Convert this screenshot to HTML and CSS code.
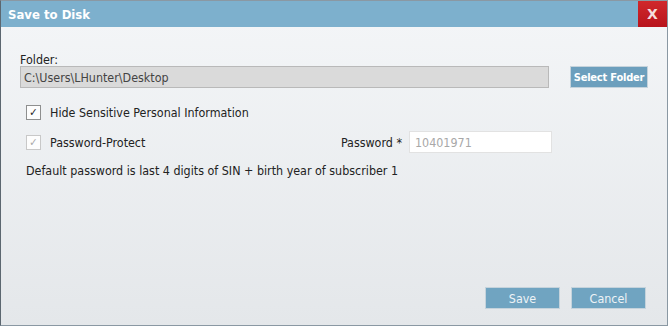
FILE: index.html
```html
<!DOCTYPE html>
<html lang="en">
<head>
    <meta charset="UTF-8">
    <title>Save to Disk</title>
    <link rel="stylesheet" href="styles.css">
</head>
<body>
    <div class="dialog">
        <div class="titlebar">
            <span class="title">Save to Disk</span>
            <button class="close">X</button>
        </div>

        <div class="content">
            <!-- Folder picker -->
            <label class="field-label">Folder:</label>
            <div class="folder-row">
                <input class="folder-input" type="text" value="C:\Users\LHunter\Desktop" readonly>
                <button class="btn btn-select">Select Folder</button>
            </div>

            <div class="check-row">
                <span class="checkbox checked">&#10003;</span>
                <span>Hide Sensitive Personal Information</span>
            </div>

            <div class="check-row password-row">
                <span class="checkbox disabled">&#10003;</span>
                <span class="check-text">Password-Protect</span>
                <span class="pw-label">Password *</span>
                <input class="pw-input" type="text" placeholder="10401971">
            </div>

            <p class="hint">Default password is last 4 digits of SIN + birth year of subscriber 1</p>
        </div>

        <div class="footer">
            <button class="btn btn-action">Save</button>
            <button class="btn btn-action">Cancel</button>
        </div>
    </div>
</body>
</html>
```

FILE: styles.css
```css
body {
    margin: 0;
    padding: 0;
    font-family: "DejaVu Sans Condensed", "DejaVu Sans", sans-serif;
    font-size: 12.4px;
    color: #222;
}
.dialog {
    width: 666px;
    height: 324px;
    border: 1px solid #8a98a3;
    border-left-color: #5c6770;
    display: flex;
    flex-direction: column;
    background: linear-gradient(#f4f6f8, #e4e7ea);
}
.titlebar {
    height: 26px;
    background-color: #7db0cd;
    display: flex;
    align-items: center;
    justify-content: space-between;
}
.title {
    color: #fff;
    font-weight: bold;
    font-size: 13px;
    padding-left: 7px;
}
.close {
    width: 29px;
    height: 26px;
    border: none;
    background: linear-gradient(#d0282c, #b8141c);
    color: #f4dede;
    font-family: "DejaVu Sans", sans-serif;
    font-size: 14px;
    font-weight: bold;
    padding: 0;
}
.content {
    flex: 1;
    padding: 26px 19px 0 19px;
}
.field-label {
    display: block;
    height: 13px;
    line-height: 13px;
}
.folder-row {
    display: flex;
    gap: 21px;
    align-items: center;
}
.folder-input {
    width: 524px;
    height: 20px;
    margin: 0;
    border: 1px solid #b9b9b9;
    background: #dadada;
    color: #444;
    font-family: inherit;
    font-size: 12.4px;
    padding: 0 0 0 3px;
}
.btn {
    border: 1px solid #c5d3dc;
    background-color: #6c9fbd;
    color: #fff;
    font-family: inherit;
    font-size: 12.4px;
    padding: 0;
    white-space: nowrap;
    overflow: hidden;
}
.btn-select {
    width: 78px;
    height: 22px;
    font-weight: bold;
    font-size: 11px;
    letter-spacing: -0.2px;
}
.check-row {
    display: flex;
    align-items: center;
    height: 16px;
    margin-top: 16px;
    padding-left: 6px;
}
.checkbox {
    width: 13px;
    height: 13px;
    border: 1px solid #8e8f8f;
    background: #fdfdfd;
    color: #222;
    font-size: 11px;
    line-height: 13px;
    text-align: center;
    margin-right: 9px;
}
.checkbox.disabled {
    border-color: #c8c8c8;
    color: #a8a8a8;
}
.password-row {
    margin-top: 11px;
    height: 22px;
}
.check-text {
    width: 259px;
}
.pw-label {
    width: 93px;
    text-align: right;
    margin-right: 7px;
}
.pw-input {
    width: 136px;
    height: 20px;
    margin: 0;
    border: 1px solid #e2e2e2;
    background: #fff;
    font-family: inherit;
    font-size: 12.4px;
    padding: 0 0 0 5px;
}
.pw-input::placeholder {
    color: #a8a8a8;
}
.hint {
    margin: 10px 0 0 6px;
}
.footer {
    display: flex;
    justify-content: flex-end;
    gap: 11px;
    padding: 0 21px 16px 0;
}
.btn-action {
    width: 75px;
    height: 22px;
    color: #eef3f6;
    background-color: #70a4c1;
}
```
